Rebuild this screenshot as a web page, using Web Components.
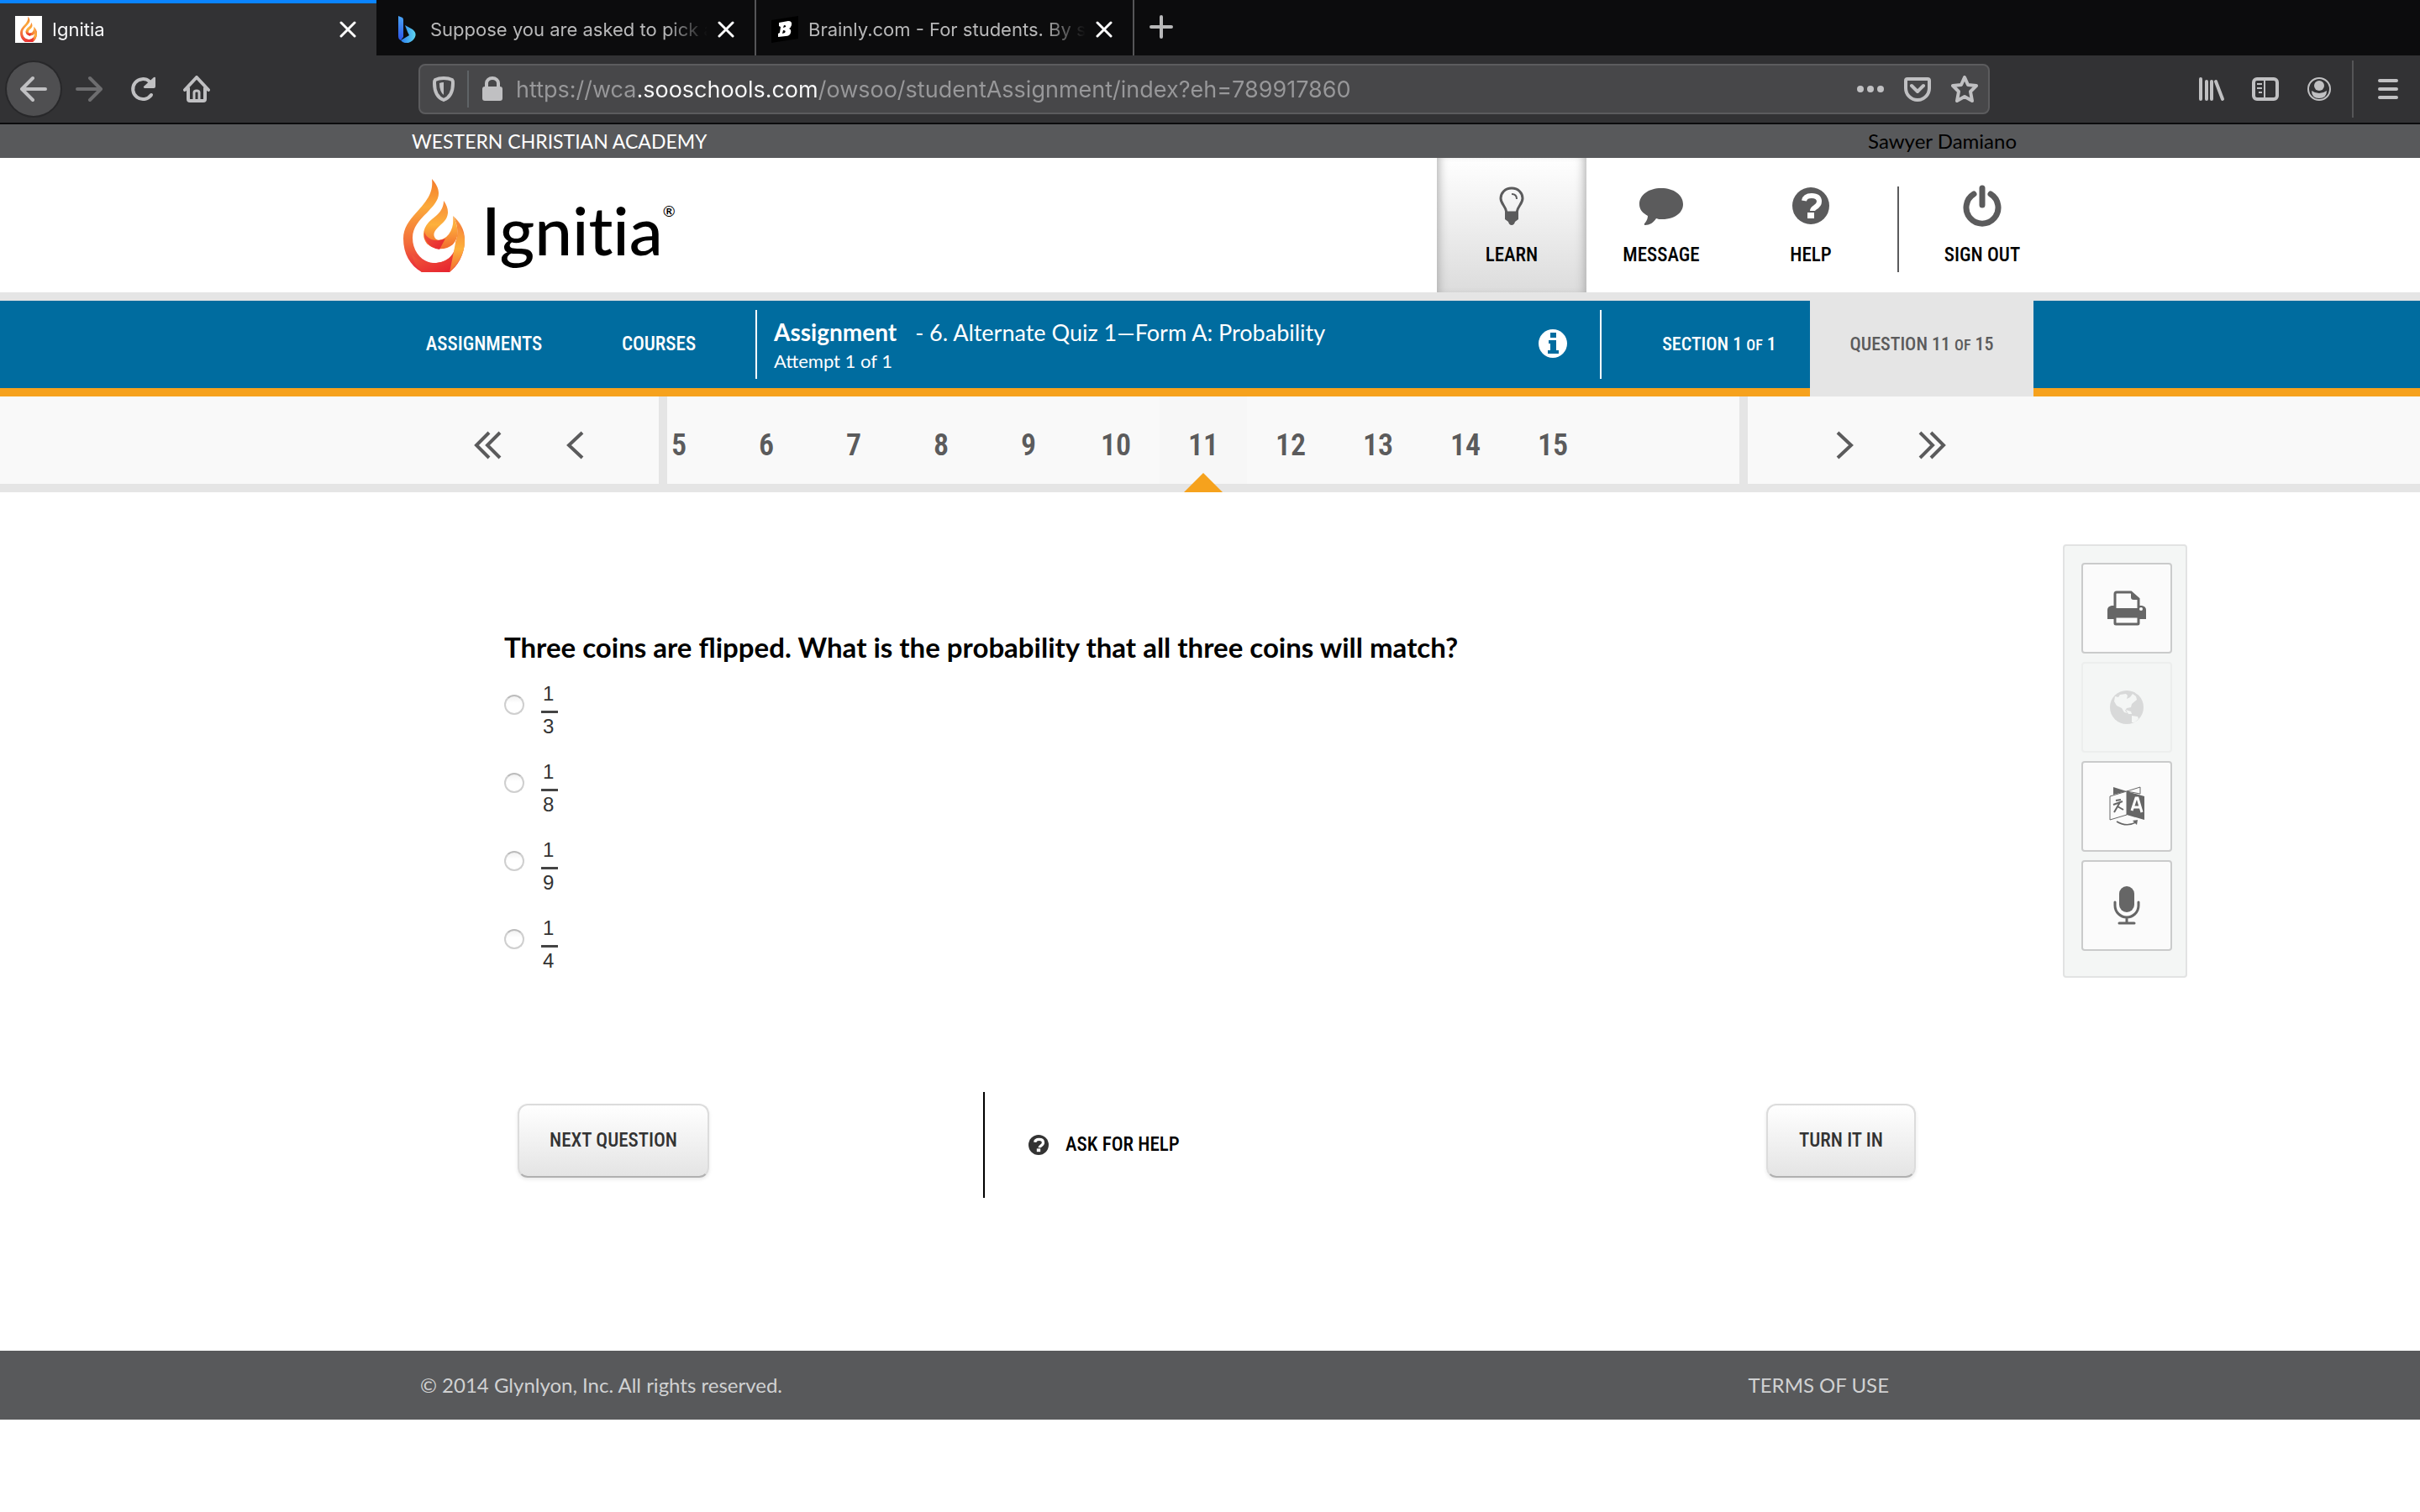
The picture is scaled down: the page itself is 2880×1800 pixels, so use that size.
<!DOCTYPE html>
<html lang="en">
<head>
<meta charset="utf-8">
<title>Ignitia</title>
<style>
  body {
    margin: 0;
    background: #fff;
    color: #000;
    font-family: Lato, "Open Sans", sans-serif;
    font-size: 24px;
    --ui: Inter, Roboto, sans-serif;
    --narrow: "Liberation Sans Narrow", "Roboto Condensed", "Liberation Sans", sans-serif;
    --page: 1960px;
    --slate: #58595b;
    --rule: #e5e5e5;
    --blue: #006c9f;
    --orange: #f6a21d;
  }
</style>
</head>
<body>
<browser-chrome></browser-chrome>
<school-bar school="WESTERN CHRISTIAN ACADEMY" student="Sawyer Damiano"></school-bar>
<site-header>
  <header-item icon="bulb" active>LEARN</header-item>
  <header-item icon="message">MESSAGE</header-item>
  <header-item icon="help">HELP</header-item>
  <header-item icon="power" slot="account">SIGN OUT</header-item>
</site-header>
<course-nav></course-nav>
<question-strip first="5" last="15" current="11"></question-strip>
<quiz-stage>
  <quiz-question>
    <span slot="prompt">Three coins are flipped. What is the probability that all three coins will match?</span>
    <answer-choice top="1" bottom="3"></answer-choice>
    <answer-choice top="1" bottom="8"></answer-choice>
    <answer-choice top="1" bottom="9"></answer-choice>
    <answer-choice top="1" bottom="4"></answer-choice>
  </quiz-question>
  <quiz-actions></quiz-actions>
  <tool-panel slot="tools"></tool-panel>
</quiz-stage>
<site-footer></site-footer>

<script>
const icons = {
  close: { box: "0 0 20 20", svg: '<path d="M2 2l16 16M18 2L2 18" stroke="currentColor" stroke-width="3" stroke-linecap="round"/>' },
  plus: { box: "0 0 28 28", svg: '<path d="M14 2v24M2 14h24" stroke="currentColor" stroke-width="4" stroke-linecap="round"/>' },
  back: { box: "0 0 32 32", svg: '<path d="M30 16H3M15 3L2 16l13 13" fill="none" stroke="currentColor" stroke-width="4" stroke-linecap="round" stroke-linejoin="round"/>' },
  forward: { box: "0 0 32 32", svg: '<path d="M2 16h27M17 3l13 13-13 13" fill="none" stroke="currentColor" stroke-width="4" stroke-linecap="round" stroke-linejoin="round"/>' },
  reload: { box: "0 0 32 32", svg: '<path d="M26 23A12 12 0 1 1 24 7" fill="none" stroke="currentColor" stroke-width="4" stroke-linecap="round"/><path d="M29 2q2-1 2 1v10q0 2-2 2H18q-2-1-1-2z" fill="currentColor"/>' },
  home: { box: "0 0 32 32", svg: '<path d="M2 17L16 2l14 15M6 15v13q0 2 2 2h16q2 0 2-2V15" fill="none" stroke="currentColor" stroke-width="4" stroke-linecap="round" stroke-linejoin="round"/><path d="M13 29v-9q0-2 3-2t3 2v9" fill="none" stroke="currentColor" stroke-width="3"/>' },
  shield: { box: "0 0 28 32", svg: '<path d="M14 3Q20 3 24 5Q25 6 25 9C25 19 22 26 14 29C6 26 3 19 3 9Q3 6 4 5Q8 3 14 3z" fill="none" stroke="currentColor" stroke-width="4"/><path d="M14 8v15q-5-4-5-14 2-1 5-1z" fill="currentColor"/>' },
  lock: { box: "0 0 26 32", svg: '<path d="M6 16V9a7 6 0 0 1 14 0v7" fill="none" stroke="currentColor" stroke-width="4"/><rect x="1" y="13" width="24" height="17" rx="3" fill="currentColor"/>' },
  dots: { box: "0 0 32 32", svg: '<g fill="currentColor"><circle cx="4" cy="16" r="4"/><circle cx="16" cy="16" r="4"/><circle cx="28" cy="16" r="4"/></g>' },
  pocket: { box: "0 0 32 32", svg: '<path d="M4 4h24q2 0 2 2v9a14 14 0 0 1-28 0V6q0-2 2-2z" fill="none" stroke="currentColor" stroke-width="4"/><path d="M9 12l7 7 7-7" fill="none" stroke="currentColor" stroke-width="4" stroke-linecap="round" stroke-linejoin="round"/>' },
  star: { box: "0 0 32 32", svg: '<path d="M16 2l4 9 10 1-7 7 2 11-9-5-9 5 2-11-7-7 10-1z" fill="none" stroke="currentColor" stroke-width="4" stroke-linejoin="round"/>' },
  library: { box: "0 0 32 32", svg: '<path d="M3 4v24M10 7v21M16 7v21M21 7l8 21" fill="none" stroke="currentColor" stroke-width="4" stroke-linecap="round"/>' },
  sidebar: { box: "0 0 32 32", svg: '<rect x="2" y="4" width="28" height="24" rx="4" fill="none" stroke="currentColor" stroke-width="4"/><path d="M15 4v24M6 10h6M6 15h6M8 20h4" stroke="currentColor" stroke-width="2"/>' },
  account: { box: "0 0 32 32", svg: '<circle cx="16" cy="16" r="13" fill="none" stroke="currentColor" stroke-width="2"/><circle cx="16" cy="12" r="6" fill="currentColor"/><path d="M7 18q4 3 9 3t9-3q0 9-9 9t-9-9z" fill="currentColor"/>' },
  menu: { box: "0 0 32 32", svg: '<path d="M6 6h20M6 16h20M6 26h20" stroke="currentColor" stroke-width="4" stroke-linecap="round"/>' },
  bing: { box: "0 0 22 32", svg: '<defs><linearGradient id="a" x2="0" y2="1"><stop stop-color="#4aa5f5"/><stop offset="1" stop-color="#2d54e8"/></linearGradient><linearGradient id="b" x2="1"><stop stop-color="#2a7df0"/><stop offset="1" stop-color="#5fd6ee"/></linearGradient></defs><path d="M1 0l5 2q1 1 1 3v20l-3 4q-3-1-3-5z" fill="url(#a)"/><path d="M9 11l9 5q5 4 3 9-2 5-8 7-6 1-9-3l10-6-2-4z" fill="url(#b)"/>' },
  brainly: { box: "0 0 32 32", svg: '<path d="M0 5L32 0v27L0 32z" fill="#000"/><path fill="#fff" fill-rule="evenodd" d="M9 8l11-2q5 0 4 5-1 3-3 4 3 1 2 5-1 4-6 4l-9 1v-4l2-1 1-7-2-1zM15 11l-1 3 3-1q1-2-2-2zM14 17l-1 4 3-1q2-3-2-3z"/>' },
  bulb: { box: "0 0 30 46", svg: '<path d="M15 2C7 2 2 8 2 14c0 7 6 9 7 17h12c1-8 7-10 7-17 0-6-5-12-13-12z" fill="none" stroke="currentColor" stroke-width="3"/><path d="M15 9q6 0 6 6" fill="none" stroke="currentColor" stroke-width="2"/><path d="M7 30h16v9l-4 3q-1 4-4 4t-4-4l-4-3z" fill="currentColor"/>' },
  message: { box: "0 0 52 46", svg: '<path d="M26 2c15 0 26 8 26 19 0 11-11 18-25 18-4 0-4 0-7-1-3 5-8 8-13 8-2 0-1-2 0-3 2-3 3-5 3-8C3 31 0 27 0 21 0 10 11 2 26 2z" fill="currentColor"/>' },
  help: { box: "0 0 44 44", svg: '<circle cx="22" cy="22" r="22" fill="currentColor"/><path d="M14 16q1-6 9-6 9 0 9 7 0 4-5 7-3 2-3 4" fill="none" stroke="#fff" stroke-width="6"/><path d="M18 30h8v7h-8z" fill="#fff"/>' },
  power: { box: "0 0 46 50", svg: '<path d="M13 11a19 19 0 1 0 20 0" fill="none" stroke="currentColor" stroke-width="7" stroke-linecap="round"/><path d="M23 4v20" stroke="currentColor" stroke-width="7" stroke-linecap="round"/>' },
  info: { box: "0 0 34 34", svg: '<circle cx="17" cy="17" r="17" fill="#fff"/><path d="M14 4h7v6h-7zM12 13h9v12h3v4H11v-4h3v-8h-2z" fill="#006c9f"/>' },
  prev: { box: "0 0 34 34", svg: '<path d="M25 2L9 17l16 15" fill="none" stroke="currentColor" stroke-width="4"/>' },
  next: { box: "0 0 34 34", svg: '<path d="M9 2l16 15L9 32" fill="none" stroke="currentColor" stroke-width="4"/>' },
  first: { box: "0 0 34 34", svg: '<path d="M18 2L3 17l15 15M31 2L16 17l15 15" fill="none" stroke="currentColor" stroke-width="4"/>' },
  last: { box: "0 0 34 34", svg: '<path d="M16 2l15 15-15 15M3 2l15 15L3 32" fill="none" stroke="currentColor" stroke-width="4"/>' },
  print: { box: "0 0 46 42", svg: '<path d="M9 22V4q0-2 2-2h17l9 8v12" fill="none" stroke="currentColor" stroke-width="3"/><path d="M28 1l10 10h-7q-3 0-3-3z" fill="currentColor"/><path d="M5 18h3v3h30v-3h3q5 1 5 5v11H0V23q0-4 5-5z" fill="currentColor"/><path d="M9 31h28v8q0 1-1 1H10q-1 0-1-1z" fill="#fbfbfb" stroke="currentColor" stroke-width="3"/><circle cx="40" cy="22" r="2" fill="#fbfbfb"/>' },
  globe: { box: "0 0 42 42", svg: '<circle cx="21" cy="21" r="20" fill="currentColor"/><path d="M7 8l4 1 2-3 7-1 2 2-1 4 4-2 3-4 4 3 1 4-6 5-1 4-5 1-2 3 3 3-4-1-3-5-6-3-3-5zM20 24l6 2 1 3h-4zM27 31l7 1 1 3-5 4h-3z" fill="#f4f6f5"/>' },
  translate: { box: "0 0 44 50", svg: '<path d="M6 2v9l16-4z" fill="currentColor"/><path d="M38 2v8L22 7z" fill="none" stroke="currentColor"/><path d="M2 13l20-6v28L2 41z" fill="#fbfbfb" stroke="currentColor"/><path d="M22 7l21 6v28l-21-6z" fill="currentColor"/><path d="M9 18l6-1M6 23l11-4M14 20L7 32M11 25l7 4" fill="none" stroke="currentColor" stroke-width="2"/><path d="M28 30l5-15h2l5 17M29 26h9" fill="none" stroke="#fff" stroke-width="3"/><path d="M10 43q12 7 23 1" fill="none" stroke="currentColor" stroke-width="1.5"/><path d="M29 42l6-1-1 6z" fill="currentColor"/>' },
  mic: { box: "0 0 32 46", svg: '<rect x="7" y="0" width="18" height="31" rx="9" fill="currentColor"/><path d="M2 19v4a14 14 0 0 0 28 0v-4M16 37v7M7 44h18" fill="none" stroke="currentColor" stroke-width="3" stroke-linecap="round"/>' },
  flame: { box: "0 0 73 112", svg: `<defs>
      <linearGradient id="o" x2="0" y2="1"><stop stop-color="#f47a2a"/><stop offset=".3" stop-color="#fbaa3b"/><stop offset=".7" stop-color="#f26a3a"/><stop offset="1" stop-color="#e8253b"/></linearGradient>
      <linearGradient id="r" x2="1" y2="1"><stop stop-color="#f05a3a"/><stop offset="1" stop-color="#e6202f"/></linearGradient>
      <linearGradient id="m" x2="0" y2="1"><stop stop-color="#f7893a"/><stop offset=".5" stop-color="#fdb13c"/><stop offset="1" stop-color="#f26a30"/></linearGradient>
    </defs>
    <path d="M34 0C40 7 44 14 41 23C35 39 11 49 11 70C11 87 23 100 37 100C53 100 63 88 62 76C66 66 65 54 59 44C68 52 73 60 73 73C73 91 64 104 55 111H22C8 103 0 89 0 71C0 42 38 32 34 0z" fill="url(#o)"/>
    <path d="M10 90Q22 101 39 100Q52 99 59 90L55 111H22Q14 105 10 90z" fill="url(#r)"/>
    <path d="M62 76Q66 66 65 56Q74 64 73 76Q72 95 55 111Q58 98 62 76z" fill="url(#m)"/>
    <path d="M48 26C54 34 55 43 49 50C43 57 34 62 37 69C40 76 49 72 54 66C59 59 60 52 59 44C67 60 66 70 59 78C50 86 35 84 28 77C20 67 25 55 34 48C42 42 48 36 48 26z" fill="url(#m)"/>
    <path d="M25 62C27 72 38 76 50 71L43 84Q30 82 25 70z" fill="url(#r)"/>` }
};

class UiIcon extends HTMLElement {
  constructor() {
    super();
    this.attachShadow({ mode: "open" });
  }
  connectedCallback() {
    const icon = icons[this.getAttribute("name")];
    const [, , w, h] = icon.box.split(" ");
    this.shadowRoot.innerHTML = `
      <style>
        :host { display: inline-flex; flex: none; }
        svg { display: block; width: var(--icon-width, ${w}px); height: var(--icon-height, ${h}px); }
      </style>
      <svg viewBox="${icon.box}" fill="none" aria-hidden="true">${icon.svg}</svg>
    `;
  }
}
customElements.define("ui-icon", UiIcon);

class BrowserTab extends HTMLElement {
  constructor() {
    super();
    this.attachShadow({ mode: "open" });
  }
  connectedCallback() {
    this.shadowRoot.innerHTML = `
      <style>
        :host {
          display: flex;
          align-items: center;
          box-sizing: border-box;
          width: 450px;
          height: 66px;
          padding: 4px 24px 0 18px;
          gap: 12px;
          border-right: 2px solid #555557;
          color: #b8b8b9;
          font: 22px/32px var(--ui);
        }
        :host([active]) {
          width: 448px;
          margin-right: 2px;
          padding-top: 0;
          border-top: 4px solid #0a84ff;
          border-right: 0;
          background: #323234;
          color: #f9f9fa;
        }
        .fav { display: flex; width: 32px; justify-content: center; }
        .fav.paper { background: #fff; --icon-width: 20px; --icon-height: 32px; }
        .title {
          flex: 1;
          overflow: hidden;
          white-space: nowrap;
          -webkit-mask-image: linear-gradient(to left, transparent, #000 50px);
          mask-image: linear-gradient(to left, transparent, #000 50px);
        }
        button { display: flex; padding: 0; border: 0; background: none; color: #fff; }
      </style>
      <span class="fav ${this.hasAttribute("active") ? "paper" : ""}"><ui-icon name="${this.getAttribute("icon")}"></ui-icon></span>
      <span class="title"><slot></slot></span>
      <button aria-label="Close tab"><ui-icon name="close"></ui-icon></button>
    `;
  }
}
customElements.define("browser-tab", BrowserTab);

class BrowserChrome extends HTMLElement {
  constructor() {
    super();
    this.attachShadow({ mode: "open" }).innerHTML = `
      <style>
        :host { display: block; background: #323234; border-bottom: 2px solid #0c0c0d; }
        button { display: flex; align-items: center; justify-content: center; width: 64px; height: 64px; padding: 0; border: 0; background: none; color: #c0c0c2; }
        .tabs { display: flex; height: 66px; background: #0c0c0d; }
        .tabs > button { color: #b8b8b9; }
        .bar { display: flex; align-items: center; height: 80px; padding: 0 6px 0 8px; }
        .round { margin-right: 2px; border-radius: 50%; background: #4f4f51; box-shadow: 0 0 0 2px #28282a; }
        .off { color: #6d6d6f; }
        .url {
          display: flex;
          align-items: center;
          flex: 1;
          height: 56px;
          margin: 0 232px;
          border: 2px solid #5c5c5e;
          border-radius: 8px;
          background: #474749;
          color: #b1b1b3;
        }
        .url button { width: 56px; height: 56px; }
        .divider { width: 2px; height: 44px; background: #5f6367; }
        input {
          flex: 1;
          min-width: 0;
          height: 44px;
          padding: 2px 0 0;
          border: 0;
          outline: 0;
          font: 27px/44px var(--ui);
          background: linear-gradient(to right, #98989a 146px, #f9f9fa 146px, #f9f9fa 359px, #98989a 359px);
          -webkit-background-clip: text;
          background-clip: text;
          color: transparent;
        }
        .end { display: flex; align-items: center; margin-left: auto; }
        .end .divider { height: 68px; margin: 0 9px 0 7px; background: #555557; }
      </style>
      <div class="tabs">
        <browser-tab icon="flame" active>Ignitia</browser-tab>
        <browser-tab icon="bing">Suppose you are asked to pick a card</browser-tab>
        <browser-tab icon="brainly">Brainly.com - For students. By students.</browser-tab>
        <button aria-label="New tab"><ui-icon name="plus"></ui-icon></button>
      </div>
      <div class="bar">
        <button class="round" aria-label="Back"><ui-icon name="back"></ui-icon></button>
        <button class="off" aria-label="Forward"><ui-icon name="forward"></ui-icon></button>
        <button aria-label="Reload"><ui-icon name="reload"></ui-icon></button>
        <button aria-label="Home"><ui-icon name="home"></ui-icon></button>
        <div class="url">
          <button aria-label="Tracking protection"><ui-icon name="shield"></ui-icon></button>
          <span class="divider"></span>
          <button aria-label="Site information"><ui-icon name="lock"></ui-icon></button>
          <input aria-label="Address" value="https://wca.sooschools.com/owsoo/studentAssignment/index?eh=789917860">
          <button aria-label="Page actions"><ui-icon name="dots"></ui-icon></button>
          <button aria-label="Save to Pocket"><ui-icon name="pocket"></ui-icon></button>
          <button aria-label="Bookmark"><ui-icon name="star"></ui-icon></button>
        </div>
        <div class="end">
          <button aria-label="Library"><ui-icon name="library"></ui-icon></button>
          <button aria-label="Sidebars"><ui-icon name="sidebar"></ui-icon></button>
          <button aria-label="Account"><ui-icon name="account"></ui-icon></button>
          <span class="divider"></span>
          <button aria-label="Open menu"><ui-icon name="menu"></ui-icon></button>
        </div>
      </div>
    `;
  }
}
customElements.define("browser-chrome", BrowserChrome);

class SchoolBar extends HTMLElement {
  constructor() {
    super();
    this.attachShadow({ mode: "open" });
  }
  connectedCallback() {
    this.shadowRoot.innerHTML = `
      <style>
        :host { display: block; background: var(--slate); }
        .row {
          display: flex;
          justify-content: space-between;
          box-sizing: border-box;
          max-width: var(--page);
          margin: 0 auto;
          padding: 0 20px 0 30px;
          line-height: 40px;
        }
        .school { color: #fff; font-size: 23px; }
      </style>
      <div class="row">
        <span class="school">${this.getAttribute("school")}</span>
        <span>${this.getAttribute("student")}</span>
      </div>
    `;
  }
}
customElements.define("school-bar", SchoolBar);

class HeaderItem extends HTMLElement {
  constructor() {
    super();
    this.attachShadow({ mode: "open" });
  }
  connectedCallback() {
    this.shadowRoot.innerHTML = `
      <style>
        :host { display: block; width: 178px; }
        :host([active]) {
          background: linear-gradient(#fff, #dcdcdc);
          box-shadow: inset 10px 0 12px -8px #aaa, inset -10px 0 12px -8px #aaa;
        }
        a {
          display: flex;
          flex-direction: column;
          align-items: center;
          gap: 18px;
          height: 130px;
          padding-top: 30px;
          color: #000;
          font: 500 23px/28px var(--narrow);
          text-decoration: none;
        }
        .icon { display: flex; align-items: center; height: 54px; color: #5b5b5c; }
      </style>
      <a href="#"><span class="icon"><ui-icon name="${this.getAttribute("icon")}"></ui-icon></span><slot></slot></a>
    `;
  }
}
customElements.define("header-item", HeaderItem);

class SiteHeader extends HTMLElement {
  constructor() {
    super();
    this.attachShadow({ mode: "open" }).innerHTML = `
      <style>
        :host { display: block; border-bottom: 10px solid var(--rule); background: #fff; }
        .row { display: flex; max-width: var(--page); height: 160px; margin: 0 auto; }
        .logo { display: flex; align-items: flex-start; padding: 25px 0 0 20px; color: #000; text-decoration: none; }
        .word { margin: 12px 0 0 20px; font: 500 80px/96px Lato, sans-serif; font-variant-ligatures: none; }
        sup { font-size: 18px; line-height: 20px; vertical-align: 46px; }
        nav { display: flex; margin-left: auto; }
        .divider { width: 2px; height: 102px; margin: 34px 0 0 14px; background: #5b5b5c; }
        .account { margin: 0 -28px 0 10px; }
      </style>
      <div class="row">
        <a class="logo" href="#"><ui-icon name="flame"></ui-icon><span class="word">Ignitia<sup>®</sup></span></a>
        <nav>
          <slot></slot>
          <span class="divider"></span>
          <div class="account"><slot name="account"></slot></div>
        </nav>
      </div>
    `;
  }
}
customElements.define("site-header", SiteHeader);

class CourseNav extends HTMLElement {
  constructor() {
    super();
    this.attachShadow({ mode: "open" }).innerHTML = `
      <style>
        :host { display: block; border-bottom: 10px solid var(--orange); background: var(--blue); color: #fff; }
        .row { display: flex; max-width: var(--page); height: 104px; margin: 0 auto; }
        a {
          display: flex;
          align-items: center;
          justify-content: center;
          width: 208px;
          color: #fff;
          font: 500 23px/28px var(--narrow);
          text-decoration: none;
        }
        a:first-child { margin-left: 12px; }
        a span { white-space: pre; }
        small { font-size: 18px; }
        .divider { flex: none; align-self: center; width: 2px; height: 82px; background: #fff; }
        .divider.first { margin: 0 20px 0 11px; }
        .title { flex: 1; padding-top: 20px; line-height: 34px; white-space: nowrap; }
        .name { font-size: 27px; }
        .name b { margin-right: 22px; font-size: 28px; }
        .attempt { font-size: 22px; }
        button { width: 114px; padding: 0 0 0 2px; border: 0; background: none; }
        .section, .question { font-size: 22px; }
        .section { width: 216px; padding-left: 32px; }
        .question { width: 266px; margin-bottom: -10px; padding-bottom: 10px; box-sizing: border-box; height: 114px; background: var(--rule); color: #5b5b5c; }
      </style>
      <div class="row">
        <a href="#">ASSIGNMENTS</a>
        <a href="#">COURSES</a>
        <span class="divider first"></span>
        <div class="title">
          <div class="name"><b>Assignment</b>- 6. Alternate Quiz 1—Form A: Probability</div>
          <div class="attempt">Attempt 1 of 1</div>
        </div>
        <button aria-label="Assignment information"><ui-icon name="info"></ui-icon></button>
        <span class="divider"></span>
        <a class="section" href="#"><span>SECTION 1 <small>OF</small> 1</span></a>
        <a class="question" href="#"><span>QUESTION 11 <small>OF</small> 15</span></a>
      </div>
    `;
  }
}
customElements.define("course-nav", CourseNav);

class QuestionStrip extends HTMLElement {
  constructor() {
    super();
    this.attachShadow({ mode: "open" });
  }
  connectedCallback() {
    const first = Number(this.getAttribute("first"));
    const last = Number(this.getAttribute("last"));
    const current = Number(this.getAttribute("current"));
    let cells = "";
    for (let n = first; n <= last; n++) {
      cells += `<button class="cell ${n === current ? "current" : ""}">${n}</button>`;
    }
    this.shadowRoot.innerHTML = `
      <style>
        :host { display: block; background: linear-gradient(#f9f9f9 104px, var(--rule) 104px); }
        .row { display: flex; max-width: var(--page); height: 114px; margin: 0 auto; }
        .arrows { display: flex; box-sizing: border-box; width: 324px; padding-left: 69px; }
        .arrows.end { width: 340px; padding-left: 63px; }
        .list { display: flex; flex: 1; overflow: hidden; border: solid var(--rule); border-width: 0 10px; }
        button {
          display: flex;
          flex: none;
          align-items: center;
          justify-content: center;
          position: relative;
          box-sizing: border-box;
          width: 104px;
          height: 104px;
          padding: 12px 0 0;
          border: 0;
          background: none;
          color: #5b5b5c;
          font: 600 36px/40px var(--narrow);
        }
        .cell:first-child { margin-left: -38px; }
        .current { height: 114px; padding-bottom: 10px; background: linear-gradient(#f7f7f7 104px, transparent 104px); }
        .current::after {
          content: "";
          position: absolute;
          bottom: 0;
          border: solid transparent;
          border-width: 0 23px 23px;
          border-bottom-color: var(--orange);
        }
      </style>
      <div class="row">
        <div class="arrows">
          <button aria-label="First question"><ui-icon name="first"></ui-icon></button>
          <button aria-label="Previous question"><ui-icon name="prev"></ui-icon></button>
        </div>
        <div class="list">${cells}</div>
        <div class="arrows end">
          <button aria-label="Next question"><ui-icon name="next"></ui-icon></button>
          <button aria-label="Last question"><ui-icon name="last"></ui-icon></button>
        </div>
      </div>
    `;
  }
}
customElements.define("question-strip", QuestionStrip);

class QuizStage extends HTMLElement {
  constructor() {
    super();
    this.attachShadow({ mode: "open" }).innerHTML = `
      <style>
        :host {
          display: grid;
          grid-template-columns: 1fr minmax(0, var(--page)) 1fr;
          padding-bottom: 182px;
        }
        .main { grid-column: 2; }
        .tools { grid-column: 3; padding: 62px 0 0 35px; }
      </style>
      <div class="main"><slot></slot></div>
      <div class="tools"><slot name="tools"></slot></div>
    `;
  }
}
customElements.define("quiz-stage", QuizStage);

class QuizQuestion extends HTMLElement {
  constructor() {
    super();
    this.attachShadow({ mode: "open" }).innerHTML = `
      <style>
        :host { display: block; padding: 164px 140px 0; }
        fieldset { display: flex; flex-direction: column; gap: 23px; margin: 0; padding: 0; border: 0; }
        legend { padding: 0; margin-bottom: 20px; font-size: 33px; font-weight: bold; line-height: 40px; }
      </style>
      <fieldset>
        <legend><slot name="prompt"></slot></legend>
        <slot></slot>
      </fieldset>
    `;
  }
}
customElements.define("quiz-question", QuizQuestion);

class AnswerChoice extends HTMLElement {
  constructor() {
    super();
    this.attachShadow({ mode: "open" });
  }
  connectedCallback() {
    this.shadowRoot.innerHTML = `
      <style>
        :host { display: block; }
        label { display: flex; gap: 20px; width: max-content; }
        input {
          appearance: none;
          width: 24px;
          height: 24px;
          margin: 17px 0 0;
          border: 2px solid #cfcfcf;
          border-top-color: #bbb;
          border-radius: 50%;
          background: linear-gradient(#f2f2f2, #fff 40%);
        }
        .fraction {
          display: flex;
          flex-direction: column;
          width: 20px;
          color: #333;
          font: 24px/32px "Liberation Sans", sans-serif;
        }
        .top, .bottom { padding-left: 2px; }
        .top { padding-bottom: 4px; border-bottom: 3px solid #444; }
        .bottom { padding-top: 1px; line-height: 30px; }
      </style>
      <label>
        <input type="radio" name="answer">
        <span class="fraction">
          <span class="top">${this.getAttribute("top")}</span>
          <span class="bottom">${this.getAttribute("bottom")}</span>
        </span>
      </label>
    `;
  }
}
customElements.define("answer-choice", AnswerChoice);

class QuizActions extends HTMLElement {
  constructor() {
    super();
    this.attachShadow({ mode: "open" }).innerHTML = `
      <style>
        :host { display: flex; align-items: flex-start; padding: 141px 140px 0 156px; }
        button {
          height: 88px;
          margin-top: 14px;
          padding: 0;
          border: 2px solid #dcdcdc;
          border-bottom: 2px solid #b0b0b0;
          border-radius: 12px;
          background: linear-gradient(#fff, #e4e4e4);
          box-shadow: 0 2px 4px #e8e8e8;
          color: #333;
          font: 500 23px/28px var(--narrow);
        }
        .next { width: 228px; }
        .turn-in { width: 178px; margin-left: auto; }
        .divider { width: 2px; height: 126px; margin: 0 52px 0 326px; background: #000; }
        a {
          display: flex;
          align-items: center;
          gap: 20px;
          height: 126px;
          color: #000;
          font: 500 23px/28px var(--narrow);
          text-decoration: none;
        }
        ui-icon { --icon-width: 24px; --icon-height: 24px; color: #333; }
      </style>
      <button class="next">NEXT QUESTION</button>
      <span class="divider"></span>
      <a href="#"><ui-icon name="help"></ui-icon>ASK FOR HELP</a>
      <button class="turn-in">TURN IT IN</button>
    `;
  }
}
customElements.define("quiz-actions", QuizActions);

class ToolPanel extends HTMLElement {
  constructor() {
    super();
    this.attachShadow({ mode: "open" }).innerHTML = `
      <style>
        :host {
          display: flex;
          flex-direction: column;
          gap: 10px;
          box-sizing: border-box;
          width: 148px;
          padding: 20px 16px 30px 20px;
          border: 2px solid #e2e3e3;
          border-radius: 4px;
          background: #f4f6f5;
        }
        button {
          display: flex;
          align-items: center;
          justify-content: center;
          box-sizing: border-box;
          width: 108px;
          height: 108px;
          padding: 0;
          border: 2px solid #cacbcb;
          border-radius: 4px;
          background: #fbfbfb;
          color: #666;
        }
        button:disabled { border-color: #eceeed; background: none; color: #d8d9d9; }
      </style>
      <button aria-label="Print"><ui-icon name="print"></ui-icon></button>
      <button aria-label="Web resources" disabled><ui-icon name="globe"></ui-icon></button>
      <button aria-label="Translate"><ui-icon name="translate"></ui-icon></button>
      <button aria-label="Record"><ui-icon name="mic"></ui-icon></button>
    `;
  }
}
customElements.define("tool-panel", ToolPanel);

class SiteFooter extends HTMLElement {
  constructor() {
    super();
    this.attachShadow({ mode: "open" }).innerHTML = `
      <style>
        :host { display: block; background: var(--slate); color: #d0d1d2; }
        .row {
          display: flex;
          justify-content: space-between;
          box-sizing: border-box;
          max-width: var(--page);
          margin: 0 auto;
          padding: 0 172px 0 40px;
          line-height: 82px;
        }
        a { color: inherit; text-decoration: none; }
      </style>
      <div class="row">
        <span>© 2014 Glynlyon, Inc. All rights reserved.</span>
        <a href="#">TERMS OF USE</a>
      </div>
    `;
  }
}
customElements.define("site-footer", SiteFooter);
</script>
</body>
</html>
